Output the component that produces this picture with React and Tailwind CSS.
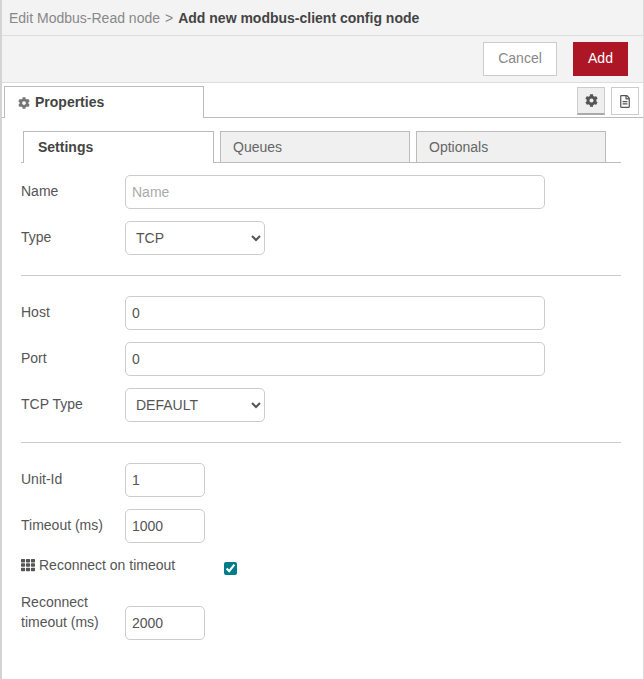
import React from "react";
import { FaCog, FaTh, FaRegFileAlt } from "react-icons/fa";

function Row({ label, children }) {
  return (
    <div className="flex items-start mb-3">
      <label className="w-[104px] mt-[6px] leading-5 text-[#555]">{label}</label>
      {children}
    </div>
  );
}

function TextInput({ value, placeholder, wide }) {
  return (
    <input
      readOnly
      value={value}
      placeholder={placeholder}
      className={`${wide ? "w-[420px]" : "w-[80px]"} h-[34px] px-[6px] border border-[#ccc] rounded-[5px] bg-white text-[#555] text-[14px] placeholder:text-[#aaa] outline-none`}
    />
  );
}

function Select({ value }) {
  return (
    <select
      value={value}
      onChange={() => {}}
      className="w-[140px] h-[34px] pl-[6px] border border-[#ccc] rounded-[5px] bg-white text-[#555] text-[14px] outline-none"
    >
      <option value={value}>{value}</option>
    </select>
  );
}

function Divider() {
  return <div className="w-[600px] h-px bg-[#ccc] mt-[20px] mb-[20px]" />;
}

export default function App() {
  return (
    <div
      className="w-[644px] h-[679px] overflow-hidden bg-white text-[14px] text-[#555] border-l-2 border-l-[#d4d4d4] border-r border-r-[#ddd] flex flex-col"
      style={{ fontFamily: '"Liberation Sans", Arial, sans-serif' }}
    >
      <div className="h-[36px] shrink-0 bg-[#f3f3f3] border-b border-[#ddd] flex items-center pl-[7px] leading-5">
        <span className="text-[#888]">Edit Modbus-Read node</span>
        <span className="text-[#888] mx-[5px]">&gt;</span>
        <span className="font-bold text-[#444]">Add new modbus-client config node</span>
      </div>

      <div className="h-[47px] shrink-0 bg-[#f3f3f3] border-b border-[#ddd] flex items-center justify-end gap-4 pr-[15px] pb-px">
        <button className="w-[74px] h-[34px] bg-white border border-[#ccc] text-[#888]">Cancel</button>
        <button className="w-[55px] h-[34px] bg-[#ad1625] text-white">Add</button>
      </div>

      <div className="h-[35px] shrink-0 border-b border-[#bbb] relative flex items-start justify-between pl-[2px] pr-[4px]">
        <div className="mt-[3px] w-[200px] h-[32px] bg-white border border-b-0 border-[#bbb] flex items-center pl-[13px] gap-[5px] font-bold text-[#444]">
          <FaCog className="text-[#777] w-[12px] h-[12px]" />
          <span>Properties</span>
        </div>
        <div className="flex gap-[6px] mt-[4px]">
          <button className="w-[28px] h-[28px] bg-[#efefef] border border-[#ccc] border-b-[2px] border-b-[#aaa] flex items-center justify-center">
            <FaCog className="text-[#555] w-[13px] h-[13px]" />
          </button>
          <button className="w-[28px] h-[28px] bg-white border border-[#ccc] flex items-center justify-center">
            <FaRegFileAlt className="text-[#555] w-[12px] h-[13px]" />
          </button>
        </div>
      </div>

      <div className="pl-[19px] flex-1">
        <div className="mt-[13px] w-[600px] h-[32px] border-b border-[#bbb] flex items-start pl-[2px] gap-[6px]">
          <div className="w-[191px] h-[32px] bg-white border border-b-0 border-[#bbb] flex items-center pl-[14px] font-bold text-[#444]">Settings</div>
          <div className="w-[190px] h-[31px] bg-[#f0f0f0] border border-b-0 border-[#bbb] flex items-center pl-[12px] text-[#666]">Queues</div>
          <div className="w-[190px] h-[31px] bg-[#f0f0f0] border border-b-0 border-[#bbb] flex items-center pl-[12px] text-[#666]">Optionals</div>
        </div>

        <div className="mt-[12px]">
          <Row label="Name"><TextInput value="" placeholder="Name" wide /></Row>
          <Row label="Type"><Select value="TCP" /></Row>
          <Divider />
          <Row label="Host"><TextInput value="0" wide /></Row>
          <Row label="Port"><TextInput value="0" wide /></Row>
          <Row label="TCP Type"><Select value="DEFAULT" /></Row>
          <Divider />
          <Row label="Unit-Id"><TextInput value="1" /></Row>
          <Row label="Timeout (ms)"><TextInput value="1000" /></Row>
          <div className="flex items-start h-[25px] mb-3">
            <label className="w-[203px] leading-5 flex items-center gap-[4px]">
              <FaTh className="text-[#555] w-[14px] h-[14px]" />
              <span>Reconnect on timeout</span>
            </label>
            <input type="checkbox" readOnly checked className="w-[13px] h-[13px] m-0 mt-[7px] accent-[#007c89]" />
          </div>
          <div className="flex items-start">
            <label className="w-[104px] leading-5">Reconnect<br />timeout (ms)</label>
            <div className="mt-[14px]"><TextInput value="2000" /></div>
          </div>
        </div>
      </div>
    </div>
  );
}
